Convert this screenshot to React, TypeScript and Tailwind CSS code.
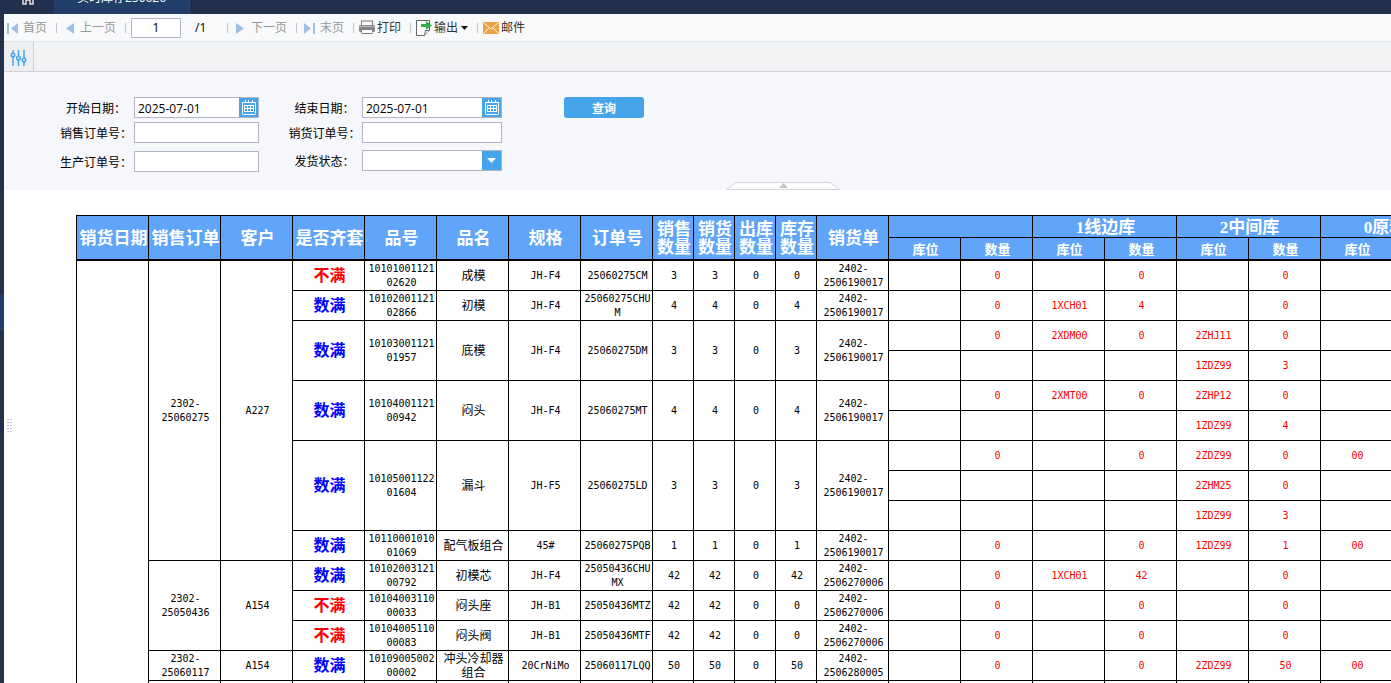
import { Fragment, type ReactNode } from "react";

type Line = string[];

type Item = {
  full: boolean;
  code: string;
  name: string;
  spec: string;
  order: string;
  counts: number[];
  delivery: string;
  lines: Line[];
};

type Group = {
  order: string;
  customer: string;
  items: Item[];
};

// each line holds location / quantity pairs for the four warehouses
const groups: Group[] = [
  {
    order: "2302-25060275",
    customer: "A227",
    items: [
      {
        full: false,
        code: "1010100112102620",
        name: "成模",
        spec: "JH-F4",
        order: "25060275CM",
        counts: [3, 3, 0, 0],
        delivery: "2402-2506190017",
        lines: [["", "0", "", "0", "", "0", "", "0"]],
      },
      {
        full: true,
        code: "1010200112102866",
        name: "初模",
        spec: "JH-F4",
        order: "25060275CHUM",
        counts: [4, 4, 0, 4],
        delivery: "2402-2506190017",
        lines: [["", "0", "1XCH01", "4", "", "0", "", "0"]],
      },
      {
        full: true,
        code: "1010300112101957",
        name: "底模",
        spec: "JH-F4",
        order: "25060275DM",
        counts: [3, 3, 0, 3],
        delivery: "2402-2506190017",
        lines: [
          ["", "0", "2XDM00", "0", "2ZHJ11", "0", "", "0"],
          ["", "", "", "", "1ZDZ99", "3", "", ""],
        ],
      },
      {
        full: true,
        code: "1010400112100942",
        name: "闷头",
        spec: "JH-F4",
        order: "25060275MT",
        counts: [4, 4, 0, 4],
        delivery: "2402-2506190017",
        lines: [
          ["", "0", "2XMT00", "0", "2ZHP12", "0", "", "0"],
          ["", "", "", "", "1ZDZ99", "4", "", ""],
        ],
      },
      {
        full: true,
        code: "1010500112201604",
        name: "漏斗",
        spec: "JH-F5",
        order: "25060275LD",
        counts: [3, 3, 0, 3],
        delivery: "2402-2506190017",
        lines: [
          ["", "0", "", "0", "2ZDZ99", "0", "00", "0"],
          ["", "", "", "", "2ZHM25", "0", "", ""],
          ["", "", "", "", "1ZDZ99", "3", "", ""],
        ],
      },
      {
        full: true,
        code: "1011000101001069",
        name: "配气板组合",
        spec: "45#",
        order: "25060275PQB",
        counts: [1, 1, 0, 1],
        delivery: "2402-2506190017",
        lines: [["", "0", "", "0", "1ZDZ99", "1", "00", "0"]],
      },
    ],
  },
  {
    order: "2302-25050436",
    customer: "A154",
    items: [
      {
        full: true,
        code: "1010200312100792",
        name: "初模芯",
        spec: "JH-F4",
        order: "25050436CHUMX",
        counts: [42, 42, 0, 42],
        delivery: "2402-2506270006",
        lines: [["", "0", "1XCH01", "42", "", "0", "", "0"]],
      },
      {
        full: false,
        code: "1010400311000033",
        name: "闷头座",
        spec: "JH-B1",
        order: "25050436MTZ",
        counts: [42, 42, 0, 0],
        delivery: "2402-2506270006",
        lines: [["", "0", "", "0", "", "0", "", "0"]],
      },
      {
        full: false,
        code: "1010400511000083",
        name: "闷头阀",
        spec: "JH-B1",
        order: "25050436MTF",
        counts: [42, 42, 0, 0],
        delivery: "2402-2506270006",
        lines: [["", "0", "", "0", "", "0", "", "0"]],
      },
    ],
  },
  {
    order: "2302-25060117",
    customer: "A154",
    items: [
      {
        full: true,
        code: "1010900500200002",
        name: "冲头冷却器组合",
        spec: "20CrNiMo",
        order: "25060117LQQ",
        counts: [50, 50, 0, 50],
        delivery: "2402-2506280005",
        lines: [["", "0", "", "0", "2ZDZ99", "50", "00", "0"]],
      },
    ],
  },
];

const wideHeads = ["销货日期", "销售订单", "客户", "是否齐套", "品号", "品名", "规格", "订单号"];
const countHeads = ["销售数量", "销货数量", "出库数量", "库存数量"];
const warehouses = ["", "1线边库", "2中间库", "0原料库"];

const lineCount = (items: Item[]) => items.reduce((n, item) => n + item.lines.length, 0);
const totalLines = groups.reduce((n, group) => n + lineCount(group.items), 0);

function Head({ children, thick = true, ...rest }: { children?: ReactNode; thick?: boolean; rowSpan?: number; colSpan?: number }) {
  return (
    <th
      {...rest}
      className={`border-r border-black bg-[#60a5fa] pt-0.5 pr-0 pb-0 pl-0.5 text-[17px] leading-[18px] font-bold text-white ${thick ? "border-b-2" : "border-b"}`}
    >
      {children}
    </th>
  );
}

function Cell({ children, className = "", rowSpan }: { children?: ReactNode; className?: string; rowSpan?: number }) {
  return (
    <td
      rowSpan={rowSpan}
      className={`border-r border-b border-black pt-px pr-0 pb-0 pl-0.5 text-center wrap-anywhere ${className}`}
    >
      {children}
    </td>
  );
}

function ItemRows({ item, lead }: { item: Item; lead?: ReactNode }) {
  const span = item.lines.length;
  return (
    <>
      {item.lines.map((line, i) => (
        <tr key={i} className="h-[30px]">
          {i === 0 && (
            <>
              {lead}
              <Cell
                rowSpan={span}
                className={`text-[16px] leading-5 font-bold ${item.full ? "text-[#0000ff]" : "text-[#ff0000]"}`}
              >
                {item.full ? "数满" : "不满"}
              </Cell>
              <Cell rowSpan={span}>{item.code}</Cell>
              <Cell rowSpan={span} className="text-[12px]">{item.name}</Cell>
              <Cell rowSpan={span}>{item.spec}</Cell>
              <Cell rowSpan={span}>{item.order}</Cell>
              {item.counts.map((count, c) => (
                <Cell key={c} rowSpan={span}>{count}</Cell>
              ))}
              <Cell rowSpan={span}>{item.delivery}</Cell>
            </>
          )}
          {line.map((value, c) => (
            <Cell key={c} className="text-[#ff0000]">{value}</Cell>
          ))}
        </tr>
      ))}
    </>
  );
}

function StockTable() {
  return (
    <table className="w-[1389px] table-fixed border-separate border-spacing-0 border-t border-l border-black font-['DejaVu_Sans_Mono','Noto_Sans_CJK_SC',monospace] text-[10px] leading-[14px] text-black">
      <colgroup>
        <col span={8} className="w-[72px]" />
        <col span={4} className="w-[41px]" />
        <col span={9} className="w-[72px]" />
      </colgroup>
      <thead className="font-['Liberation_Serif','Noto_Sans_CJK_SC',serif]">
        <tr className="h-[22px]">
          {wideHeads.map((head) => (
            <Head key={head} rowSpan={2}>{head}</Head>
          ))}
          {countHeads.map((head) => (
            <Head key={head} rowSpan={2}>
              {head.slice(0, 2)}
              <br />
              {head.slice(2)}
            </Head>
          ))}
          <Head rowSpan={2}>销货单</Head>
          {warehouses.map((name) => (
            <Head key={name} colSpan={2} thick={false}>{name}</Head>
          ))}
        </tr>
        <tr className="h-[23px]">
          {warehouses.map((name) => (
            <Fragment key={name}>
              <Head><span className="text-[13px]">库位</span></Head>
              <Head><span className="text-[13px]">数量</span></Head>
            </Fragment>
          ))}
        </tr>
      </thead>
      <tbody>
        {groups.map((group, g) =>
          group.items.map((item, i) => (
            <ItemRows
              key={item.code}
              item={item}
              lead={
                i === 0 && (
                  <>
                    {g === 0 && <Cell rowSpan={totalLines + 1} />}
                    <Cell rowSpan={lineCount(group.items)}>{group.order}</Cell>
                    <Cell rowSpan={lineCount(group.items)}>{group.customer}</Cell>
                  </>
                )
              }
            />
          )),
        )}
        <tr className="h-[30px]">
          {Array.from({ length: 20 }, (_, i) => (
            <Cell key={i} />
          ))}
        </tr>
      </tbody>
    </table>
  );
}

function Separator() {
  return <span className="mr-[5px] ml-[9px] h-[10px] w-px shrink-0 bg-[#c4c6ca]" />;
}

function PagerIcon({ d }: { d: string }) {
  return (
    <svg width="14" height="14" viewBox="0 0 14 14" fill="#9dbfe5">
      <path d={d} />
    </svg>
  );
}

function PrintIcon() {
  return (
    <svg width="16" height="15" viewBox="0 0 16 15">
      <rect x="2.5" y="1" width="11" height="5" fill="#fff" stroke="#777" />
      <rect x="0" y="5" width="16" height="7" rx="1.5" fill="#858789" />
      <rect x="1" y="6" width="14" height="1" fill="#b7b9bb" />
      <rect x="2.5" y="9.5" width="11" height="4" rx="1" fill="#fff" stroke="#777" />
    </svg>
  );
}

function ExportIcon() {
  return (
    <svg width="16" height="16" viewBox="0 0 16 16">
      <path d="M.5 .5h13v10l-5 5h-8z" fill="#fff" stroke="#666" />
      <path d="M13.500 10.500h-4l-1 5" fill="#eee" stroke="#666" />
      <path d="M5 4h5V1l6 4.500-6 4.500V7H5z" fill="#2fae4b" />
    </svg>
  );
}

function MailIcon() {
  return (
    <svg width="16" height="12" viewBox="0 0 16 12">
      <rect width="16" height="12" rx="1" fill="#eaa544" />
      <path d="M1 1l7 6 7-6M1 11l5-5M15 11l-5-5" fill="none" stroke="#fff3da" />
    </svg>
  );
}

function CalendarIcon() {
  return (
    <svg width="14" height="15" viewBox="0 0 14 15" fill="none" stroke="#fff">
      <path d="M.5 2.500h13v11q0 1-1 1h-11q-1 0-1-1z" />
      <path d="M3.500 0v3M6.500 0v3M10.500 0v3" />
      <path d="M2 5.500h10M2 8.500h10M2 11.500h10M2.500 5v7M5.500 5v7M8.500 5v7M11.500 5v7" />
    </svg>
  );
}

function Toolbar() {
  const button = "flex items-center whitespace-nowrap";
  return (
    <div className="flex h-7 items-center border-b border-[#e0e3e8] bg-[#f7f9fb] pl-px text-[12px] text-[#333]">
      <button className={`${button} gap-1 text-[#999]`}>
        <PagerIcon d="M2 2h2v11h-2zM13 2v11L6 7.500z" />
        首页
      </button>
      <Separator />
      <button className={`${button} gap-1 text-[#999]`}>
        <PagerIcon d="M12 2v11L4 7.500z" />
        上一页
      </button>
      <Separator />
      <input
        aria-label="页码"
        defaultValue="1"
        className="h-5 w-[50px] border border-[#b3b5ca] bg-white text-center text-[12px] text-black outline-none"
      />
      <span className="w-[37px] pl-[14px] text-black">/1</span>
      <Separator />
      <button className={`${button} gap-1 text-[#999]`}>
        <PagerIcon d="M3 2v11l8-5.500z" />
        下一页
      </button>
      <Separator />
      <button className={`${button} gap-1 text-[#999]`}>
        <PagerIcon d="M2 2v11l7-5.500zM11 2h2v11h-2z" />
        末页
      </button>
      <Separator />
      <button className={`${button} gap-0.5`}>
        <PrintIcon />
        打印
      </button>
      <Separator />
      <button className={`${button} gap-0.5`}>
        <ExportIcon />
        输出
        <svg width="8" height="4" viewBox="0 0 8 4">
          <path d="M1 0h7L4.500 4z" fill="#111" />
        </svg>
      </button>
      <Separator />
      <button className={`${button} gap-0.5`}>
        <MailIcon />
        邮件
      </button>
    </div>
  );
}

function DateField({ id }: { id: string }) {
  return (
    <div className="flex h-[21px] border border-[#b3b5c7] bg-white">
      <input
        id={id}
        defaultValue="2025-07-01"
        className="min-w-0 flex-1 px-[3px] pt-0.5 text-[12px] text-black outline-none"
      />
      <button aria-label="选择日期" className="flex w-[19px] items-center justify-center bg-[#46a5ea]">
        <CalendarIcon />
      </button>
    </div>
  );
}

function TextField({ id }: { id: string }) {
  return <input id={id} className="h-[21px] w-full border border-[#b3b5c7] bg-white px-[3px] text-[12px] outline-none" />;
}

function QueryForm() {
  const label = "text-center whitespace-nowrap";
  return (
    <form className="grid grid-cols-[80px_125px_103px_140px_142px] items-center gap-y-1 pt-[25px] pl-[50px] text-[12px] text-black">
      <label htmlFor="start" className={`${label} pt-0.5 pl-1`}>开始日期：</label>
      <DateField id="start" />
      <label htmlFor="end" className={`${label} pt-0.5 pl-7`}>结束日期：</label>
      <DateField id="end" />
      <button type="button" className="ml-[62px] h-[21px] rounded-[3px] bg-[#46a5ea] pt-0.5 font-bold text-white">
        查询
      </button>

      <label htmlFor="sale" className={`${label} pt-0.5 pl-1`}>销售订单号：</label>
      <TextField id="sale" />
      <label htmlFor="delivery" className={`${label} pt-0.5 pl-7`}>销货订单号：</label>
      <TextField id="delivery" />
      <span />

      <label htmlFor="production" className={`${label} pt-1.5 pl-1`}>生产订单号：</label>
      <div className="pt-1">
        <TextField id="production" />
      </div>
      <label htmlFor="status" className={`${label} pt-1 pl-7`}>发货状态：</label>
      <div className="relative pt-[3px] pb-px">
        <select id="status" className="block h-[21px] w-full appearance-none border border-[#b3b5c7] bg-white px-[3px] outline-none">
          <option></option>
        </select>
        <span className="pointer-events-none absolute right-px bottom-0.5 flex h-[19px] w-[19px] items-center justify-center bg-[#46a5ea]">
          <svg width="9" height="5" viewBox="0 0 9 5">
            <path d="M0 0h9L4.500 5z" fill="#fff" />
          </svg>
        </span>
      </div>
    </form>
  );
}

export default function App() {
  return (
    <div className="flex h-screen flex-col overflow-hidden bg-white font-['Open_Sans','Noto_Sans_CJK_SC',sans-serif]">
      <header className="flex h-[14px] shrink-0 items-end overflow-hidden bg-[#22304d]">
        <a href="#home" aria-label="首页" className="flex w-[54px] justify-center pb-[9px] pl-0.5">
          <svg width="12" height="12" viewBox="0 0 12 12" fill="none" stroke="#e9dbe4" strokeWidth="1.500">
            <path d="M1 5l5-4 5 4v6H8V7H4v4H1z" />
          </svg>
        </a>
        <a
          href="#stock"
          className="flex h-6 w-[136px] items-center justify-center border-r border-[#2d4a75] bg-[#213e69] pb-2 text-[12px] text-white"
        >
          实时库存250626
        </a>
      </header>

      <div className="flex min-h-0 flex-1">
        <aside className="w-1 shrink-0 bg-[#22304d] pt-[281px]">
          <div className="h-9 bg-[#213e69]" />
        </aside>

        <main className="relative min-w-0 flex-1 overflow-hidden">
          <Toolbar />
          <div className="flex h-[30px] border-b border-[#cfd1d4] bg-[#f2f3f5]">
            <button
              aria-label="参数"
              className="flex w-[30px] items-center justify-center border-r border-[#cfd1d4] bg-[#eeeff0] pt-0.5"
            >
              <svg width="17" height="18" viewBox="0 0 17 18" fill="none" stroke="#46a5ea" strokeWidth="1.500">
                <path d="M3 1v3M3 8v9M8.500 1v6M8.500 11v6M14 1v8M14 13v4" />
                <circle cx="3" cy="6" r="1.800" />
                <circle cx="8.500" cy="9" r="1.800" />
                <circle cx="14" cy="11" r="1.800" />
              </svg>
            </button>
          </div>

          <section className="flex h-[118px] flex-col justify-between bg-[#f6f7fa]">
            <QueryForm />
            <button aria-label="收起" className="ml-[722px] w-[114px]">
              <svg width="114" height="8" viewBox="0 0 114 8" className="block">
                <path d="M.5 7.500L10 .5h94l9.500 7z" fill="#fff" stroke="#d4d6d9" />
                <path d="M53 6l4.500-5 4.500 5z" fill="#c3c5c8" />
              </svg>
            </button>
          </section>

          <section className="pt-[25px] pl-[72px]">
            <StockTable />
          </section>

          <svg width="5" height="13" viewBox="0 0 5 13" className="absolute top-[405px] left-[3px]">
            <path d="M1 0v13M4 0v13" stroke="#7a7ab8" strokeDasharray="1 2" />
          </svg>
        </main>
      </div>
    </div>
  );
}
